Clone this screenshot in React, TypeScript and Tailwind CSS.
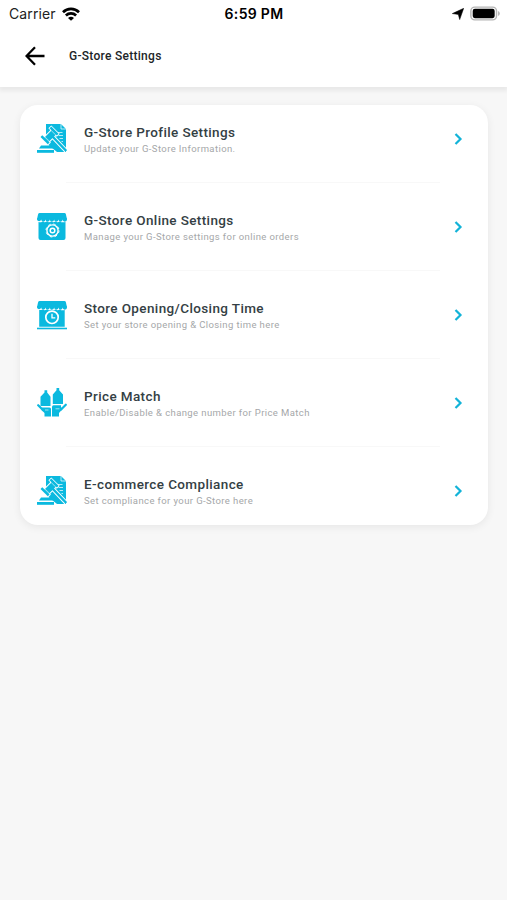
import { ReactNode } from "react";

const GavelIcon = () => (
  <svg viewBox="0 0 30 30" className="w-[30px] h-[30px]" fill="#0bb9df">
    <path d="M9 0h15l5 5v23H20L9 19z" />
    <path d="M24 0V5h5" fill="none" stroke="#fff" strokeWidth="0.700" />
    <path d="M20.500 8.500h5M21.500 11.500h4.500M22.500 14.500h3.500M24.500 17.500h1.500" stroke="#fff" strokeWidth="0.700" />
    {/* gavel: white halo first, solid shape over it */}
    <g stroke="#fff" strokeWidth="2" fill="none">
      <path d="M15.500 12.500L29 26.700" strokeWidth="4.200" />
      <path d="M7.500 13.500l7.500-7.500 4.300 4.300-7.500 7.500z" />
      <path d="M12.800 4.300l1.500-1.500 7 7-1.500 1.500z" />
      <path d="M4 13l1.500-1.500 7 7-1.500 1.500z" />
    </g>
    <path d="M15.500 12.500L29.300 27" stroke="#0bb9df" strokeWidth="2.500" />
    <path d="M7.500 13.500l7.500-7.500 4.300 4.300-7.500 7.500z" />
    <path d="M12.500 4.300l1.800-1.800 7.300 7.300-1.800 1.800z" />
    <path d="M3.500 13l1.800-1.800 7.300 7.300-1.800 1.800z" />
    <path d="M8 13L12.500 17.300M14.500 6.800l4 4" stroke="#fff" strokeWidth="0.600" />
    <path d="M4 21.500H14l2.500 3H2z" />
    <path d="M0 26h17v2.800H0z" />
  </svg>
);

const Awning = () => (
  <>
    <path d="M2.500 1h25q1 0 1.300 1L30 7H0l1.200-5q.3-1 1.300-1z" />
    <path d="M0 6.500h30v1a2.150 2.150 0 0 1-4.300 0 2.150 2.150 0 0 1-4.300 0 2.150 2.150 0 0 1-4.300 0 2.150 2.150 0 0 1-4.300 0 2.150 2.150 0 0 1-4.300 0 2.150 2.150 0 0 1-4.300 0A2.150 2.150 0 0 1 0 7.500z" />
  </>
);

const StoreGearIcon = () => (
  <svg viewBox="0 0 30 30" className="w-[30px] h-[30px]" fill="#0bb9df">
    <path d="M1.500 9.900q2 .9 4-.5 2.200 1.600 4.300 0 2.200 1.600 4.300 0 2.200 1.600 4.300 0 2.200 1.600 4.300 0 2.700 1.600 5.800.500V26q0 2-2 2h-23q-2 0-2-2z" />
    <Awning />
    <g fill="none" stroke="#fff">
      <circle cx="15.500" cy="18.500" r="5.600" strokeWidth="1.400" />
      <circle cx="15.500" cy="18.500" r="6.500" strokeWidth="1" strokeDasharray="2.500 2.600" />
      <circle cx="15.500" cy="18.500" r="2.300" strokeWidth="1.500" />
    </g>
  </svg>
);

const StoreClockIcon = () => (
  <svg viewBox="0 0 30 30" className="w-[30px] h-[30px]" fill="#0bb9df">
    <path d="M2.200 9.900q1.500.500 3.300-.5 2.200 1.600 4.300 0 2.200 1.600 4.300 0 2.200 1.600 4.300 0 2.200 1.600 4.300 0 2.300 1.400 5 .500V26.700H2.200z" />
    <Awning />
    <path d="M0 27.700h30v1.600H0z" />
    <circle cx="15" cy="17.300" r="6.200" fill="none" stroke="#fff" strokeWidth="1.700" />
    <path d="M15 13.800v4h3.300" fill="none" stroke="#fff" strokeWidth="1.300" />
  </svg>
);

const PriceMatchIcon = () => (
  <svg viewBox="0 0 30 30" className="w-[30px] h-[30px]" fill="#0bb9df">
    {/* bottles */}
    <path d="M7.500 2.300h2.700V4.500l3.300 4.300v9.200h-10V8.800L7.500 4.500z" />
    <path d="M19.500 0h2.700v2.200L26 6.500V16H15.800V6.500l3.700-4.300z" />
    {/* hands */}
    <g fill="none" stroke="#0bb9df" strokeWidth="2.200" strokeLinecap="round">
      <path d="M1.200 17.200l5 5" />
      <path d="M28.800 16.700l-5 5" />
    </g>
    <path d="M5 19.500h7.500q1.500 0 1.500 1.500v7.500H7.500V25L4.500 22z" />
    <path d="M16.500 17.300h7.500v1.700l1.500 2-3.500 4v3.500h-7V19q0-1.700 1.500-1.700z" />
    <path d="M8 22h3.500M18.500 20.800h4" stroke="#fff" strokeWidth="0.600" />
  </svg>
);

interface Setting {
  title: string;
  text: string;
  icon: ReactNode;
}

const settings: Setting[] = [
  { title: "G-Store Profile Settings", text: "Update your G-Store Information.", icon: <GavelIcon /> },
  { title: "G-Store Online Settings", text: "Manage your G-Store settings for online orders", icon: <StoreGearIcon /> },
  { title: "Store Opening/Closing Time", text: "Set your store opening & Closing time here", icon: <StoreClockIcon /> },
  { title: "Price Match", text: "Enable/Disable & change number for Price Match", icon: <PriceMatchIcon /> },
  { title: "E-commerce Compliance", text: "Set compliance for your G-Store here", icon: <GavelIcon /> },
];

const StatusBar = () => (
  <div className="grid grid-cols-3 items-center h-[27px] pl-[9px] pr-[7px] font-['Inter',sans-serif] text-black">
    <div className="flex items-center gap-[6px]">
      <span className="text-[14px] leading-none tracking-[0.1px] text-[#222]">Carrier</span>
      <svg viewBox="0 0 18 14" className="w-[18px] h-[14px]" fill="none" stroke="#000" strokeWidth="2.700">
        <path d="M1 5.200a11.500 11.500 0 0 1 16 0" />
        <path d="M3.900 8.500a7.300 7.300 0 0 1 10.200 0" />
        <path d="M9 13.800l-3-2.900q3-2.200 6 0z" fill="#000" stroke="none" />
      </svg>
    </div>
    <span className="text-center text-[14px] leading-none font-semibold tracking-[0.300px] -ml-px">6:59 PM</span>
    <div className="flex items-center justify-end gap-[6px]">
      <svg viewBox="0 0 12 12" className="w-[12px] h-[12px]">
        <path d="M11.700.300L7.700 11.600 6.300 6.400.300 5.600z" fill="#000" stroke="#000" strokeWidth="0.500" />
      </svg>
      <svg viewBox="0 0 31 15" className="w-[30px] h-[15px]">
        <rect x="0.900" y="0.900" width="26.500" height="13.200" rx="4" fill="#fff" stroke="#b5b5b5" strokeWidth="1.500" />
        <rect x="2.800" y="2.700" width="22.700" height="9.600" rx="2.200" fill="#000" />
        <path d="M29 5v5q1.800-.7 1.800-2.500T29 5z" fill="#b5b5b5" />
      </svg>
    </div>
  </div>
);

const SettingRow = ({ title, text, icon }: Setting) => {
  return (
    <button className="w-full h-[68px] flex items-center pl-[17px] pr-[25px] text-left">
      {icon}
      <div className="flex-1 ml-[17px] pt-[1px]">
        <h2 className="text-[13.500px] leading-[18px] font-medium tracking-[0.380px] text-[#344044]">{title}</h2>
        <p className="pt-px text-[9.500px] leading-[14px] tracking-[0.400px] text-[#a5a7a9]">{text}</p>
      </div>
      <svg viewBox="0 0 9 13" className="w-[9px] h-[13px]" fill="none" stroke="#12b3d8" strokeWidth="2.200">
        <path d="M1.500 1l5 5-5 5" />
      </svg>
    </button>
  );
};

const App = () => {
  return (
    <div className="min-h-screen w-full bg-[#f7f7f7] font-['Roboto',sans-serif]">
      <header className="h-[87px] bg-white shadow-[0_3px_4px_1px_rgba(0,0,0,0.06)]">
        <StatusBar />
        <div className="flex items-center h-[58px] pl-[25px]">
          <svg viewBox="0 0 20 20" className="w-[20px] h-[20px]" fill="none" stroke="#000" strokeWidth="2.300">
            <path d="M19.500 10H2M10 1.200L1.500 10l8.500 8.800" />
          </svg>
          <h1 className="ml-[24px] text-[12px] font-medium tracking-[0.280px] text-[#1c2528]">G-Store Settings</h1>
        </div>
      </header>

      <main className="pt-[18px] pl-[20px] pr-[19px]">
        <div className="bg-white rounded-[18px] shadow-[0_2px_8px_rgba(0,0,0,0.07)]">
          {settings.map((item, i) => (
            <div key={item.title}>
              {i > 0 && (
                <div className="h-[20px] flex items-start pt-[9px] pl-[46px] pr-[48px]">
                  <div className="w-full h-px bg-[#f8f8f8]"></div>
                </div>
              )}
              <SettingRow {...item} />
            </div>
          ))}
        </div>
      </main>
    </div>
  );
};

export default App;
